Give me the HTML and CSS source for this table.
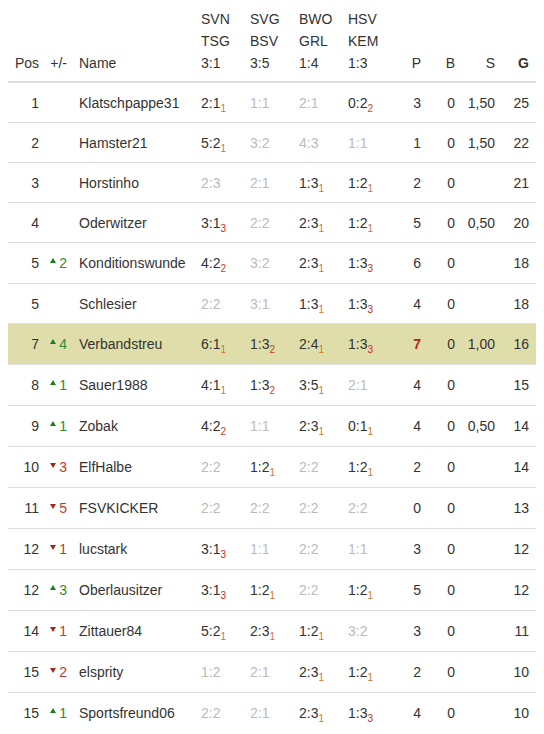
FILE: index.html
```html
<!DOCTYPE html>
<html>
<head>
<meta charset="utf-8">
<link rel="stylesheet" href="styles.css">
</head>
<body>
<div class="table">
  <div class="row head">
    <div class="c r">Pos</div>
    <div class="c r mvh">+/-</div>
    <div class="c">Name</div>
    <div class="c"><span class="l">SVN</span><span class="l">TSG</span><span class="l">3:1</span></div>
    <div class="c"><span class="l">SVG</span><span class="l">BSV</span><span class="l">3:5</span></div>
    <div class="c"><span class="l">BWO</span><span class="l">GRL</span><span class="l">1:4</span></div>
    <div class="c"><span class="l">HSV</span><span class="l">KEM</span><span class="l">1:3</span></div>
    <div class="c r">P</div>
    <div class="c r">B</div>
    <div class="c r">S</div>
    <div class="c r g"><b>G</b></div>
  </div>

  <div class="row br first">
    <div class="c r">1</div><div class="c r mvh"></div><div class="c">Klatschpappe31</div>
    <div class="c">2:1<sub class="s1">1</sub></div><div class="c gr">1:1</div><div class="c gr">2:1</div><div class="c">0:2<sub class="s2">2</sub></div>
    <div class="c r">3</div><div class="c r">0</div><div class="c r">1,50</div><div class="c r g">25</div>
  </div>

  <div class="row br">
    <div class="c r">2</div><div class="c r mvh"></div><div class="c">Hamster21</div>
    <div class="c">5:2<sub class="s1">1</sub></div><div class="c gr">3:2</div><div class="c gr">4:3</div><div class="c gr">1:1</div>
    <div class="c r">1</div><div class="c r">0</div><div class="c r">1,50</div><div class="c r g">22</div>
  </div>

  <div class="row br">
    <div class="c r">3</div><div class="c r mvh"></div><div class="c">Horstinho</div>
    <div class="c gr">2:3</div><div class="c gr">2:1</div><div class="c">1:3<sub class="s1">1</sub></div><div class="c">1:2<sub class="s1">1</sub></div>
    <div class="c r">2</div><div class="c r">0</div><div class="c r"></div><div class="c r g">21</div>
  </div>

  <div class="row br">
    <div class="c r">4</div><div class="c r mvh"></div><div class="c">Oderwitzer</div>
    <div class="c">3:1<sub class="s3">3</sub></div><div class="c gr">2:2</div><div class="c">2:3<sub class="s1">1</sub></div><div class="c">1:2<sub class="s1">1</sub></div>
    <div class="c r">5</div><div class="c r">0</div><div class="c r">0,50</div><div class="c r g">20</div>
  </div>

  <div class="row br mv">
    <div class="c r">5</div><div class="c r mvh up"><i class="tri"></i>2</div><div class="c">Konditionswunde</div>
    <div class="c">4:2<sub class="s2">2</sub></div><div class="c gr">3:2</div><div class="c">2:3<sub class="s1">1</sub></div><div class="c">1:3<sub class="s3">3</sub></div>
    <div class="c r">6</div><div class="c r">0</div><div class="c r"></div><div class="c r g">18</div>
  </div>

  <div class="row br">
    <div class="c r">5</div><div class="c r mvh"></div><div class="c">Schlesier</div>
    <div class="c gr">2:2</div><div class="c gr">3:1</div><div class="c">1:3<sub class="s1">1</sub></div><div class="c">1:3<sub class="s3">3</sub></div>
    <div class="c r">4</div><div class="c r">0</div><div class="c r"></div><div class="c r g">18</div>
  </div>

  <div class="row br mv hl">
    <div class="c r">7</div><div class="c r mvh up"><i class="tri"></i>4</div><div class="c">Verbandstreu</div>
    <div class="c">6:1<sub class="s1">1</sub></div><div class="c">1:3<sub class="s2">2</sub></div><div class="c">2:4<sub class="s1">1</sub></div><div class="c">1:3<sub class="s3">3</sub></div>
    <div class="c r"><b class="pts">7</b></div><div class="c r">0</div><div class="c r">1,00</div><div class="c r g">16</div>
  </div>

  <div class="row br mv">
    <div class="c r">8</div><div class="c r mvh up"><i class="tri"></i>1</div><div class="c">Sauer1988</div>
    <div class="c">4:1<sub class="s1">1</sub></div><div class="c">1:3<sub class="s2">2</sub></div><div class="c">3:5<sub class="s1">1</sub></div><div class="c gr">2:1</div>
    <div class="c r">4</div><div class="c r">0</div><div class="c r"></div><div class="c r g">15</div>
  </div>

  <div class="row br mv">
    <div class="c r">9</div><div class="c r mvh up"><i class="tri"></i>1</div><div class="c">Zobak</div>
    <div class="c">4:2<sub class="s2">2</sub></div><div class="c gr">1:1</div><div class="c">2:3<sub class="s1">1</sub></div><div class="c">0:1<sub class="s1">1</sub></div>
    <div class="c r">4</div><div class="c r">0</div><div class="c r">0,50</div><div class="c r g">14</div>
  </div>

  <div class="row br mv">
    <div class="c r">10</div><div class="c r mvh down"><i class="tri"></i>3</div><div class="c">ElfHalbe</div>
    <div class="c gr">2:2</div><div class="c">1:2<sub class="s1">1</sub></div><div class="c gr">2:2</div><div class="c">1:2<sub class="s1">1</sub></div>
    <div class="c r">2</div><div class="c r">0</div><div class="c r"></div><div class="c r g">14</div>
  </div>

  <div class="row br mv">
    <div class="c r">11</div><div class="c r mvh down"><i class="tri"></i>5</div><div class="c">FSVKICKER</div>
    <div class="c gr">2:2</div><div class="c gr">2:2</div><div class="c gr">2:2</div><div class="c gr">2:2</div>
    <div class="c r">0</div><div class="c r">0</div><div class="c r"></div><div class="c r g">13</div>
  </div>

  <div class="row br mv">
    <div class="c r">12</div><div class="c r mvh down"><i class="tri"></i>1</div><div class="c">lucstark</div>
    <div class="c">3:1<sub class="s3">3</sub></div><div class="c gr">1:1</div><div class="c gr">2:2</div><div class="c gr">1:1</div>
    <div class="c r">3</div><div class="c r">0</div><div class="c r"></div><div class="c r g">12</div>
  </div>

  <div class="row br mv">
    <div class="c r">12</div><div class="c r mvh up"><i class="tri"></i>3</div><div class="c">Oberlausitzer</div>
    <div class="c">3:1<sub class="s3">3</sub></div><div class="c">1:2<sub class="s1">1</sub></div><div class="c gr">2:2</div><div class="c">1:2<sub class="s1">1</sub></div>
    <div class="c r">5</div><div class="c r">0</div><div class="c r"></div><div class="c r g">12</div>
  </div>

  <div class="row br mv">
    <div class="c r">14</div><div class="c r mvh down"><i class="tri"></i>1</div><div class="c">Zittauer84</div>
    <div class="c">5:2<sub class="s1">1</sub></div><div class="c">2:3<sub class="s1">1</sub></div><div class="c">1:2<sub class="s1">1</sub></div><div class="c gr">3:2</div>
    <div class="c r">3</div><div class="c r">0</div><div class="c r"></div><div class="c r g">11</div>
  </div>

  <div class="row br mv">
    <div class="c r">15</div><div class="c r mvh down"><i class="tri"></i>2</div><div class="c">elsprity</div>
    <div class="c gr">1:2</div><div class="c gr">2:1</div><div class="c">2:3<sub class="s1">1</sub></div><div class="c">1:2<sub class="s1">1</sub></div>
    <div class="c r">2</div><div class="c r">0</div><div class="c r"></div><div class="c r g">10</div>
  </div>

  <div class="row br mv">
    <div class="c r">15</div><div class="c r mvh up"><i class="tri"></i>1</div><div class="c">Sportsfreund06</div>
    <div class="c gr">2:2</div><div class="c gr">2:1</div><div class="c">2:3<sub class="s1">1</sub></div><div class="c">1:3<sub class="s3">3</sub></div>
    <div class="c r">4</div><div class="c r">0</div><div class="c r"></div><div class="c r g">10</div>
  </div>
</div>
</body>
</html>
```

FILE: styles.css
```css
html, body {
  background: #fff;
}
body {
  margin: 8px;
  font-family: "Liberation Sans", Arial, sans-serif;
  font-size: 14px;
  color: #333;
}
.table {
  width: 528px;
}
.row {
  display: grid;
  grid-template-columns: 36px 30px 122px 49px 49px 49px 49px 34px 34px 40px 36px;
  align-items: center;
  box-sizing: border-box;
}
.head {
  height: 75px;
  align-items: end;
  line-height: 22px;
  padding-bottom: 7px;
  border-bottom: 2px solid #ddd;
}
.head .l {
  display: block;
}
.br {
  height: 40px;
  line-height: 20px;
  border-top: 1px solid #ddd;
}
.br.first {
  height: 39px;
  border-top: 0;
}
.br.mv {
  height: 41px;
}
.hl {
  background: #dfdeaa;
}
.c {
  padding: 0 5px;
  white-space: nowrap;
}
.r {
  text-align: right;
}
.mvh {
  padding-right: 7px;
}
.g {
  padding-right: 7px;
}
.gr {
  color: #bbb;
}
sub {
  font-size: 10px;
  line-height: 0;
  vertical-align: -4px;
}
.s1 { color: #d07828; }
.s2 { color: #c4421e; }
.s3 { color: #c22a24; }
.pts {
  color: #b3281b;
}
.tri {
  display: inline-block;
  width: 0;
  height: 0;
  border-left: 3px solid transparent;
  border-right: 3px solid transparent;
  margin-right: 3px;
}
.up {
  color: #2e8b2e;
}
.up .tri {
  border-bottom: 5px solid #1a7f1a;
  vertical-align: 5px;
}
.down {
  color: #c0392b;
}
.down .tri {
  border-top: 5px solid #a3281a;
  vertical-align: 4px;
}
```
